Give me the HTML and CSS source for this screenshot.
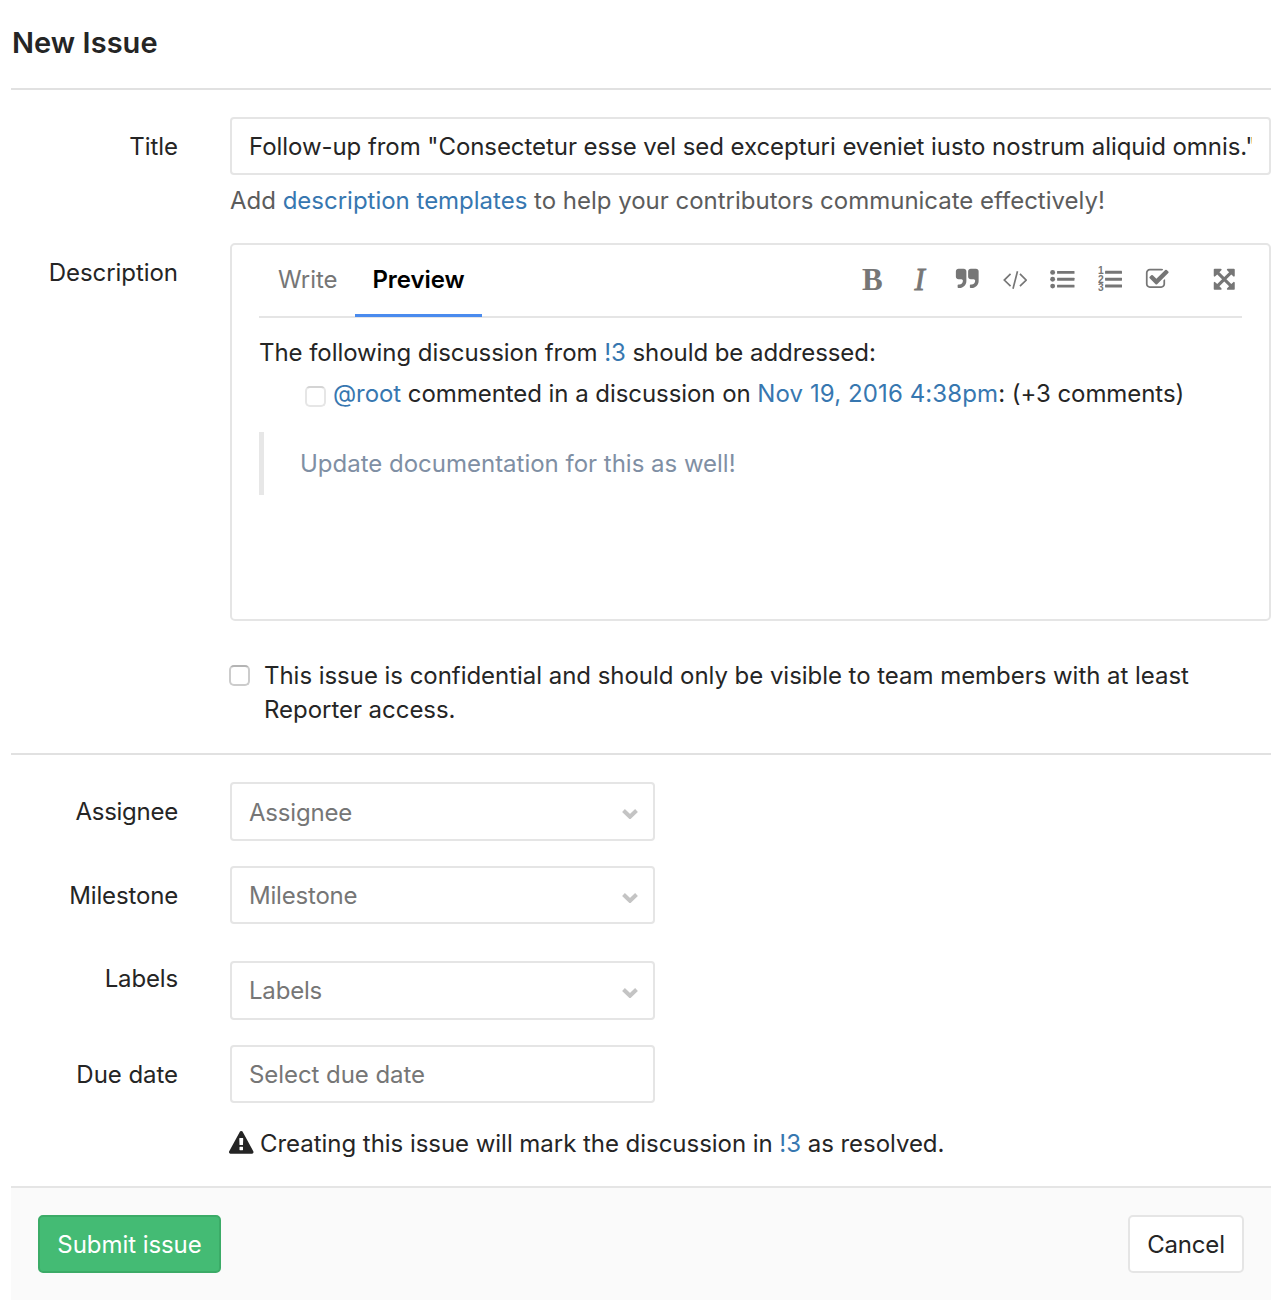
FILE: index.html
```html
<!DOCTYPE html>
<html lang="en">
<head>
<meta charset="utf-8">
<title>New Issue</title>
<link rel="stylesheet" href="styles.css">
</head>
<body>
<main class="page">
  <h1 class="page-title">New Issue</h1>
  <form class="issue-form">
    <section class="section section-main">
      <div class="row row-title">
        <label class="label" for="title">Title</label>
        <div class="control">
          <input class="field" id="title" type="text" value="Follow-up from &quot;Consectetur esse vel sed excepturi eveniet iusto nostrum aliquid omnis.&quot;">
          <p class="hint">Add <a href="#">description templates</a> to help your contributors communicate effectively!</p>
        </div>
      </div>
      <div class="row row-description">
        <span class="label">Description</span>
        <div class="editor">
          <div class="editor-head">
            <div class="tabs">
              <a class="tab" href="#">Write</a>
              <a class="tab tab-active" href="#">Preview</a>
            </div>
            <div class="toolbar">
              <span class="tool tool-bold">B</span>
              <span class="tool tool-italic">I</span>
              <svg class="tool" viewBox="0 0 1792 1792"><path d="M832 320v704q0 104-40.500 198.500t-109.500 163.500-163.500 109.500-198.500 40.500h-64q-26 0-45-19t-19-45v-128q0-26 19-45t45-19h64q106 0 181-75t75-181v-32q0-40-28-68t-68-28h-224q-80 0-136-56t-56-136v-384q0-80 56-136t136-56h384q80 0 136 56t56 136zm896 0v704q0 104-40.500 198.500t-109.500 163.500-163.500 109.500-198.500 40.500h-64q-26 0-45-19t-19-45v-128q0-26 19-45t45-19h64q106 0 181-75t75-181v-32q0-40-28-68t-68-28h-224q-80 0-136-56t-56-136v-384q0-80 56-136t136-56h384q80 0 136 56t56 136z"/></svg>
              <svg class="tool tool-stroke" viewBox="0 0 25 25"><path d="M7.700 7 1.300 13.300 7.700 19.600M17.300 7 23.700 13.300 17.300 19.600M14.800 4.400 10.200 22.200"/></svg>
              <svg class="tool" viewBox="0 0 25 25"><circle cx="2.700" cy="5.500" r="2.500"/><circle cx="2.700" cy="12.500" r="2.500"/><circle cx="2.700" cy="19.500" r="2.500"/><rect x="7.200" y="4" width="17.800" height="3" rx=".4"/><rect x="7.200" y="11" width="17.800" height="3" rx=".4"/><rect x="7.200" y="18" width="17.800" height="3" rx=".4"/></svg>
              <svg class="tool tool-list" viewBox="0 -4 25 33"><text class="digit" x="0" y="7.300">1</text><text class="digit" x="0" y="16">2</text><text class="digit" x="0" y="24.700">3</text><rect x="7.200" y="4" width="17.300" height="3" rx=".4"/><rect x="7.200" y="11" width="17.300" height="3" rx=".4"/><rect x="7.200" y="18" width="17.300" height="3" rx=".4"/></svg>
              <svg class="tool tool-check" viewBox="0 0 1792 1792"><path d="M1472 930v318q0 119-84.500 203.500t-203.500 84.500h-832q-119 0-203.500-84.500t-84.500-203.500v-832q0-119 84.500-203.500t203.500-84.500h832q63 0 117 25 15 7 18 23 3 17-9 29l-49 49q-10 10-23 10-3 0-9-2-23-6-45-6h-832q-66 0-113 47t-47 113v832q0 66 47 113t113 47h832q66 0 113-47t47-113v-254q0-13 9-22l64-64q10-10 23-10 6 0 12 3 20 8 20 29zm231-489l-814 814q-24 24-57 24t-57-24l-430-430q-24-24-24-57t24-57l110-110q24-24 57-24t57 24l263 263 647-647q24-24 57-24t57 24l110 110q24 24 24 57t-24 57z"/></svg>
              <svg class="tool tool-full" viewBox="0 0 1792 1792"><path d="M1411 541l-355 355 355 355 144-144q29-31 70-14 39 17 39 59v448q0 26-19 45t-45 19h-448q-42 0-59-40-17-39 14-69l144-144-355-355-355 355 144 144q31 30 14 69-17 40-59 40h-448q-26 0-45-19t-19-45v-448q0-42 40-59 39-17 69 14l144 144 355-355-355-355-144 144q-19 19-45 19-12 0-24-5-40-17-40-59v-448q0-26 19-45t45-19h448q42 0 59 40 17 39-14 69l-144 144 355 355 355-355-144-144q-31-30-14-69 17-40 59-40h448q26 0 45 19t19 45v448q0 42-39 59-13 5-25 5-26 0-45-19z"/></svg>
            </div>
          </div>
          <div class="preview">
            <p>The following discussion from <a href="#">!3</a> should be addressed:</p>
            <div class="task">
              <span class="checkbox checkbox-disabled"></span>
              <span><a href="#">@root</a> commented in a discussion on <a class="date" href="#">Nov 19, 2016 4:38pm</a>: (+3 comments)</span>
            </div>
            <blockquote class="quote">Update documentation for this as well!</blockquote>
          </div>
        </div>
      </div>
      <div class="row row-confidential">
        <div class="confidential">
          <span class="checkbox"></span>
          <span>This issue is confidential and should only be visible to team members with at least Reporter access.</span>
        </div>
      </div>
    </section>
    <section class="section section-meta">
      <div class="row row-assignee">
        <span class="label">Assignee</span>
        <div class="field select">Assignee<svg class="chevron" viewBox="0 0 16 10"><path d="M1.500 1.500 8 7.800 14.500 1.500"/></svg></div>
      </div>
      <div class="row row-milestone">
        <span class="label">Milestone</span>
        <div class="field select">Milestone<svg class="chevron" viewBox="0 0 16 10"><path d="M1.500 1.500 8 7.800 14.500 1.500"/></svg></div>
      </div>
      <div class="row row-labels">
        <span class="label">Labels</span>
        <div class="field select">Labels<svg class="chevron" viewBox="0 0 16 10"><path d="M1.500 1.500 8 7.800 14.500 1.500"/></svg></div>
      </div>
      <div class="row row-due">
        <label class="label" for="due">Due date</label>
        <input class="field due" id="due" type="text" placeholder="Select due date">
      </div>
      <div class="row row-notice">
        <p class="notice"><svg class="warning" viewBox="0 0 1792 1792"><path d="M1024 1375v-190q0-14-9.500-23.500t-22.500-9.500h-192q-13 0-22.500 9.500t-9.500 23.500v190q0 14 9.500 23.500t22.500 9.500h192q13 0 22.500-9.500t9.500-23.500zm-2-374l18-459q0-12-10-19-13-11-24-11h-220q-11 0-24 11-10 7-10 21l17 457q0 10 10 16.500t24 6.500h185q14 0 23.500-6.500t10.500-16.500zm-14-934l768 1408q35 63-2 126-17 29-46.500 46t-63.500 17h-1536q-34 0-63.500-17t-46.500-46q-37-63-2-126l768-1408q17-31 47-49t65-18 65 18 47 49z"/></svg><span>Creating this issue will mark the discussion in <a href="#">!3</a> as resolved.</span></p>
      </div>
    </section>
    <footer class="actions">
      <button class="btn btn-submit" type="button">Submit issue</button>
      <button class="btn btn-cancel" type="button">Cancel</button>
    </footer>
  </form>
</main>
</body>
</html>
```
FILE: styles.css
```css
* { box-sizing: border-box; }

body {
  margin: 0;
  background: #fff;
  color: #252525;
  font: 24px/34px Inter, "Open Sans", sans-serif;
  letter-spacing: -0.06px;
}

p, blockquote { margin: 0; }
a { color: #3777b0; text-decoration: none; }

.page {
  width: 1260px;
  height: 1300px;
  margin-left: 11px;
  display: flex;
  flex-direction: column;
}

.page-title {
  margin: 0;
  height: 90px;
  padding: 26px 0 0 1px;
  border-bottom: 2px solid #e1e1e1;
  font-size: 29px;
  font-weight: 600;
  line-height: 34px;
  letter-spacing: 0.05px;
}

.issue-form { flex: 1; display: flex; flex-direction: column; }

.section-main { height: 665px; padding-top: 27px; border-bottom: 2px solid #e1e1e1; }
.section-meta { height: 431px; padding-top: 27px; }

.row { display: grid; grid-template-columns: 167px 1041px; column-gap: 52px; }
.label { padding-top: 13px; text-align: right; letter-spacing: -0.05px; }
.row-confidential > *, .row-notice > * { grid-column: 2; }

.field {
  width: 100%;
  height: 58px;
  padding: 0 17px;
  border: 2px solid #e5e5e5;
  border-radius: 4px;
  background: #fff;
  color: inherit;
  font: inherit;
  letter-spacing: inherit;
}
.hint { margin-top: 9px; color: #5c5c5c; letter-spacing: -0.01px; white-space: nowrap; }

.row-description { margin-top: 25px; }
.editor {
  height: 378px;
  padding: 0 27px;
  border: 2px solid #e5e5e5;
  border-radius: 5px;
}
.editor-head {
  height: 73px;
  display: flex;
  justify-content: space-between;
  border-bottom: 2px solid #e5e5e5;
}
.tabs { display: flex; height: 72px; }
.tab { padding: 18px 18px 0 19px; color: #767676; }
.tab-active { padding: 18px 17px 0; border-bottom: 3px solid #4a8bee; color: #000; font-weight: 600; }

.toolbar { display: flex; align-items: center; gap: 23px; padding: 0 6px 2px 0; color: #767676; }
.tool { width: 24.500px; height: 24.500px; fill: currentColor; flex: none; }
.tool-list { height: 32.340px; }
.tool-bold, .tool-italic {
  text-align: center;
  font: bold 31px/26px "Liberation Serif", serif;
}
.tool-italic { font-style: italic; font-weight: 400; -webkit-text-stroke: 0.8px currentColor; }
.tool-stroke path { fill: none; stroke: currentColor; stroke-width: 1.700; }
.tool-full { margin-left: 19px; }
.digit { font: bold 10.500px "Liberation Sans", sans-serif; letter-spacing: 0; }

.preview { padding-top: 18px; }
.task { display: flex; align-items: center; margin: 7px 0 0 46px; white-space: nowrap; }
.checkbox {
  flex: none;
  width: 21px;
  height: 21px;
  border: 2px solid #ccc;
  border-top-color: #b4b4b4;
  border-radius: 5px;
  background: #fff;
}
.checkbox-disabled { margin: 4px 7px 0 0; border-color: #d4d4d4 #e6e6e6 #e6e6e6; }
.date { letter-spacing: 0.100px; }
.quote {
  height: 63px;
  margin-top: 21px;
  padding: 15px 0 0 36px;
  border-left: 5px solid #e7e7e7;
  color: #7f8fa4;
  letter-spacing: -0.01px;
}

.row-confidential { margin-top: 38px; }
.confidential { display: flex; align-items: flex-start; gap: 14px; width: 990px; margin-left: -1px; letter-spacing: -0.04px; }
.confidential .checkbox { margin-top: 6px; }

.select, .due { width: 425px; }
.select { display: flex; align-items: center; justify-content: space-between; padding-top: 2px; color: #767676; letter-spacing: -0.2px; }
.due::placeholder { color: #767676; opacity: 1; }
.chevron { width: 16px; height: 10px; margin-top: 3px; margin-right: -2px; }
.chevron path { fill: none; stroke: #c4c4c4; stroke-width: 4; }
.row-assignee .field { height: 59px; }
.row-assignee .label { letter-spacing: -0.25px; }
.row-milestone { margin-top: 25px; }
.row-milestone .label, .row-labels .label { letter-spacing: -0.15px; }
.row-labels { margin-top: 25px; }
.row-labels .field { height: 59px; margin-top: 12px; padding-top: 0; }
.row-labels .chevron { margin-top: 5px; }
.row-due { margin-top: 25px; }

.row-notice { margin-top: 24px; }
.notice { display: flex; align-items: center; gap: 6.500px; white-space: nowrap; letter-spacing: -0.04px; }
.warning { width: 24.500px; height: 24.500px; margin: -1px 0 0 -1px; fill: #252525; }

.actions {
  flex: 1;
  display: flex;
  justify-content: space-between;
  align-items: flex-start;
  padding: 27px;
  border-top: 2px solid #e5e5e5;
  background: #fafafa;
}
.btn {
  height: 58px;
  padding: 2px 0 0;
  border: 2px solid #e5e5e5;
  border-radius: 5px;
  background: #fff;
  color: inherit;
  font: inherit;
  letter-spacing: inherit;
}
.btn-submit { width: 183px; border-color: #3bab67; background: #44bb74; color: #fff; }
.btn-cancel { width: 116px; letter-spacing: -0.200px; }
```
